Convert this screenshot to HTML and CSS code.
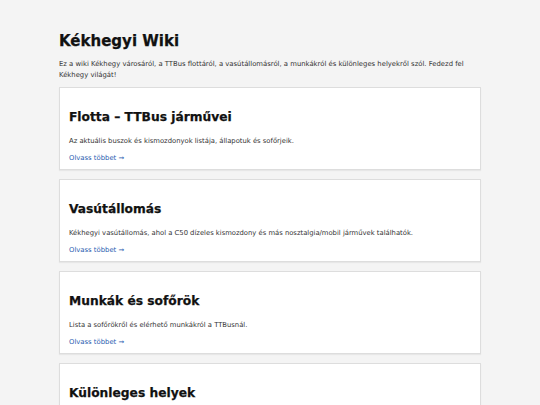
FILE: index.html
```html
<!DOCTYPE html>
<html lang="hu">
<head>
	<meta charset="UTF-8">
	<title>Kékhegyi Wiki</title>
	<link rel="stylesheet" href="styles.css">
</head>
<body>
	<main class="page">
		<h1>Kékhegyi Wiki</h1>
		<p class="intro">Ez a wiki Kékhegy városáról, a TTBus flottáról, a vasútállomásról, a munkákról és különleges helyekről szól. Fedezd fel Kékhegy világát!</p>

		<section class="card">
			<h2>Flotta – TTBus járművei</h2>
			<p>Az aktuális buszok és kismozdonyok listája, állapotuk és sofőrjeik.</p>
			<a href="#">Olvass többet →</a>
		</section>
		<section class="card">
			<h2>Vasútállomás</h2>
			<p>Kékhegyi vasútállomás, ahol a C50 dízeles kismozdony és más nosztalgia/mobil járművek találhatók.</p>
			<a href="#">Olvass többet →</a>
		</section>
		<section class="card">
			<h2>Munkák és sofőrök</h2>
			<p>Lista a sofőrökről és elérhető munkákról a TTBusnál.</p>
			<a href="#">Olvass többet →</a>
		</section>
		<section class="card">
			<h2>Különleges helyek</h2>
			<p>Kékhegy különleges és érdekes helyei, amiket érdemes felfedezni.</p>
			<a href="#">Olvass többet →</a>
		</section>
	</main>
</body>
</html>
```

FILE: styles.css
```css
body{
	margin: 0;
	background-color: #f4f4f4;
	font-family: "DejaVu Sans", Verdana, sans-serif;
	color: #222;
}
.page{
	width: 422px;
	margin: 0 auto;
	padding-top: 31px;
}
h1{
	margin: 0;
	font-size: 15px;
	line-height: 20px;
	color: #111;
	-webkit-text-stroke: 0.25px #111;
}
.intro{
	margin: 7.5px 0 6.5px;
	font-size: 6.85px;
	line-height: 11px;
	color: #333;
}
.card{
	margin-bottom: 9px;
	padding: 10px 9px 5.5px;
	background-color: #fff;
	border: 1px solid #ddd;
	box-shadow: 0 1px 1px rgba(0, 0, 0, 0.05);
}
.card h2{
	margin: 12px 0 11.5px;
	font-size: 12.25px;
	line-height: 14px;
	color: #111;
	-webkit-text-stroke: 0.25px #111;
}
.card p{
	margin: 0 0 6px;
	font-size: 6.8px;
	line-height: 11px;
	color: #333;
}
.card a{
	display: block;
	font-size: 6.85px;
	line-height: 11px;
	color: #2a5db0;
	text-decoration: none;
}
```
